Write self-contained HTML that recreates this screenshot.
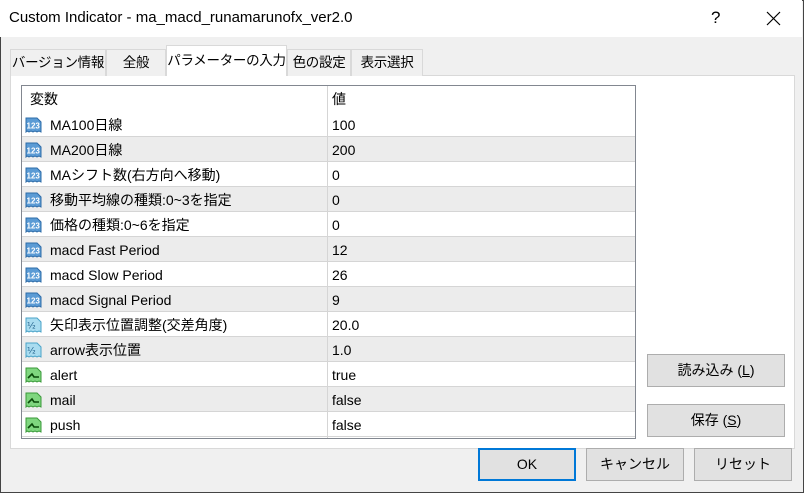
<!DOCTYPE html>
<html><head><meta charset="utf-8"><style>
*{margin:0;padding:0;box-sizing:border-box}
body{width:804px;height:493px;overflow:hidden;background:#f0f0f0;font-family:"Liberation Sans","Noto Sans CJK JP",sans-serif;font-size:14px;color:#000;position:relative}
.win{position:absolute;left:0;top:0;width:804px;height:493px;border:1px solid #444;}
.title{position:absolute;left:0;top:0;width:802px;height:37px;background:#fff}
.title .t{position:absolute;left:9px;top:9px;font-size:15px}
.abs{position:absolute}
.tab{position:absolute;top:49px;height:27px;border:1px solid #d9d9d9;border-bottom:none;background:#f0f0f0;font-size:13.5px;text-align:center;line-height:26px;white-space:nowrap;overflow:visible;letter-spacing:-0.3px}
.tab.act{top:45px;height:31px;background:#fff;line-height:30px;z-index:2}
.panel{position:absolute;left:10px;top:75px;width:785px;height:374px;background:#fff;border:1px solid #d9d9d9}
.grid{position:absolute;left:21px;top:85px;width:615px;height:354px;border:1px solid #828790;background:#fff;overflow:hidden}
.row{position:absolute;left:0;width:613px;height:25px;border-bottom:1px solid #d5d5d5;font-size:14px;line-height:27px;white-space:nowrap}
.row.g{background:#ececec}
.row .n{position:absolute;left:28px;top:0}
.row .v{position:absolute;left:310px;top:0}
.row .ic{position:absolute;left:3px;top:4px;width:17px;height:17px}
.vd{position:absolute;left:305px;top:0;width:1px;height:354px;background:#d5d5d5}
.btn{position:absolute;border:1px solid #adadad;background:#e1e1e1;text-align:center;font-size:14px}
</style></head><body>
<div class="win"></div>
<div class="title"><span class="t">Custom Indicator - ma_macd_runamarunofx_ver2.0</span>
<span class="abs" style="left:711px;top:8px;font-size:17px">?</span>
<svg class="abs" style="left:766px;top:11px" width="15" height="15"><path d="M1 1L14 14M14 1L1 14" stroke="#000" stroke-width="1.2"/></svg>
</div>
<div class="panel"></div>
<div class="tab" style="left:10px;width:96px">バージョン情報</div>
<div class="tab" style="left:106px;width:60px">全般</div>
<div class="tab act" style="left:166px;width:121px">パラメーターの入力</div>
<div class="tab" style="left:287px;width:64px">色の設定</div>
<div class="tab" style="left:351px;width:72px">表示選択</div>
<div class="grid">
<div class="row" style="top:0;border-bottom:none"><span class="n" style="left:8px">変数</span><span class="v">値</span></div>
<div id="rows"></div>
<div class="vd"></div>
</div>
<script>
var d=[["MA100日線","100",0],["MA200日線","200",0],["MAシフト数(右方向へ移動)","0",0],["移動平均線の種類:0~3を指定","0",0],["価格の種類:0~6を指定","0",0],["macd Fast Period","12",0],["macd Slow Period","26",0],["macd Signal Period","9",0],["矢印表示位置調整(交差角度)","20.0",1],["arrow表示位置","1.0",1],["alert","true",2],["mail","false",2],["push","false",2]];
var h="";
var ic=[
'<svg class="ic" viewBox="0 0 17 17"><path d="M1 2h11l4 4v10l-2-1-2 1-2-1-2 1-2-1-2 1-2-1-1 1z" fill="#5b9bd5" stroke="#2e6ca8"/><text x="1.5" y="12.5" font-size="8" fill="#fff" font-weight="bold" font-family="Liberation Sans">123</text></svg>',
'<svg class="ic" viewBox="0 0 17 17"><path d="M1 2h11l4 4v10l-2-1-2 1-2-1-2 1-2-1-2 1-2-1-1 1z" fill="#a9dcf0" stroke="#4aa3c8"/><text x="2" y="12.5" font-size="9" fill="#1f5f8a" font-family="DejaVu Sans">½</text></svg>',
'<svg class="ic" viewBox="0 0 17 17"><path d="M1 2h11l4 4v10l-2-1-2 1-2-1-2 1-2-1-2 1-2-1-1 1z" fill="#7fd67f" stroke="#3a9a3a"/><path d="M3 12l4-4 2 3h5" stroke="#0a4a0a" stroke-width="1.6" fill="none"/></svg>'];
for(var i=0;i<d.length;i++){h+='<div class="row'+(i%2?' g':'')+'" style="top:'+(26+i*25)+'px">'+ic[d[i][2]]+'<span class="n">'+d[i][0]+'</span><span class="v">'+d[i][1]+'</span></div>';}
document.getElementById("rows").innerHTML=h;
</script>
<div class="btn" style="left:647px;top:354px;width:138px;height:33px;line-height:31px">読み込み (<u>L</u>)</div>
<div class="btn" style="left:647px;top:404px;width:138px;height:33px;line-height:31px">保存 (<u>S</u>)</div>
<div class="btn" style="left:478px;top:448px;width:98px;height:33px;line-height:29px;border:2px solid #0078d7">OK</div>
<div class="btn" style="left:586px;top:448px;width:98px;height:33px;line-height:31px">キャンセル</div>
<div class="btn" style="left:694px;top:448px;width:98px;height:33px;line-height:31px">リセット</div>
</body></html>
